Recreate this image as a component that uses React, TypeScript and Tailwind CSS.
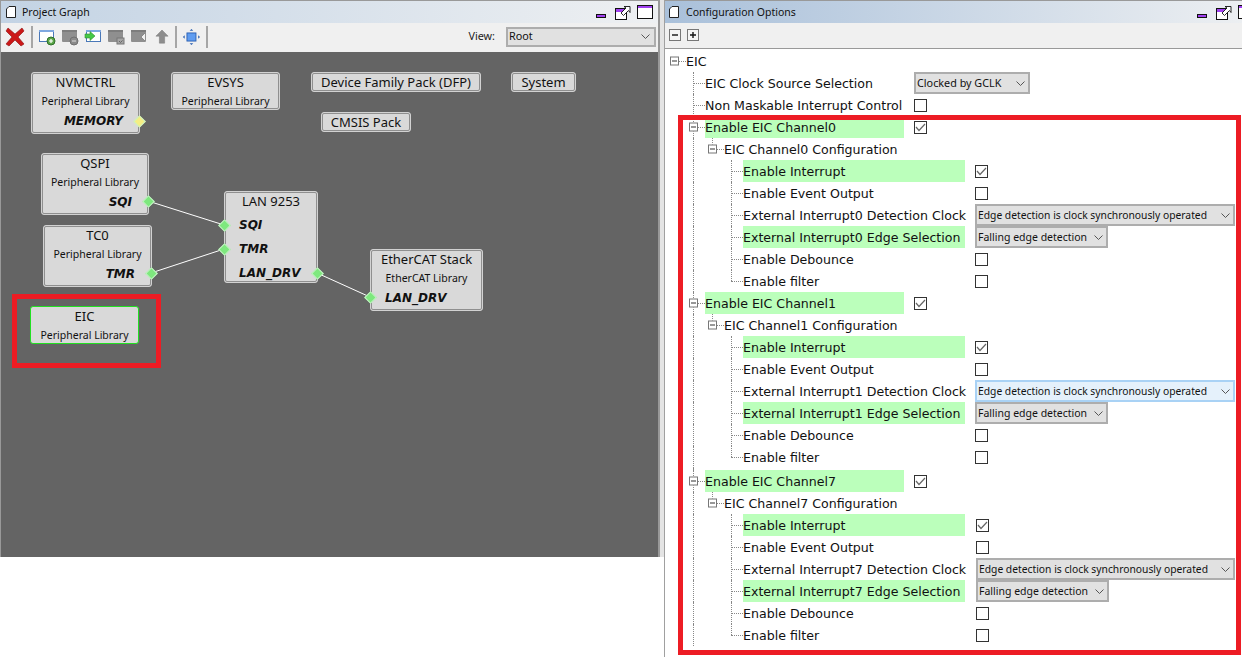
import type { ReactNode } from 'react'

const uiFont = "font-['Noto_Sans','Open_Sans',sans-serif]"
const treeFont = "font-['DejaVu_Sans','Verdana',sans-serif]"

function PageIcon() {
  return (
    <svg width="10" height="12" viewBox="0 0 10 12" className="shrink-0">
      <path d="M3 .5h6.500v11H.5V3z" fill="#fff" stroke="#222" />
    </svg>
  )
}

function WindowButtons() {
  return (
    <div className="flex items-center">
      <svg width="10" height="4" viewBox="0 0 10 4" className="mt-[8px] mr-[9px]">
        <rect x=".5" y=".5" width="9" height="3" fill="#a040f0" stroke="#111" />
      </svg>
      <svg width="16" height="16" viewBox="0 0 16 16" className="mr-[6px]">
        <rect x=".5" y="4.500" width="11" height="11" fill="#fff" stroke="#111" />
        <rect x="1" y="5" width="10" height="3" fill="#a040f0" />
        <path d="M6 9l5-5-2-1.500h6v6l-1.500-2-5 5z" fill="#fff" stroke="#111" strokeWidth=".9" />
      </svg>
      <svg width="16" height="14" viewBox="0 0 16 14">
        <rect x=".5" y=".5" width="15" height="13" fill="#fff" stroke="#111" />
        <rect x="1" y="1" width="14" height="2" fill="#a040f0" />
      </svg>
    </div>
  )
}

function TitleBar({ title, className, gap }: { title: string; className: string; gap: string }) {
  return (
    <div className={`flex h-[23px] shrink-0 items-center justify-between border-t border-[#999] pr-[5px] ${className}`}>
      <div className={`flex items-center ${gap}`}>
        <PageIcon />
        <span className={`${uiFont} mt-[1px] text-[10.5px] text-[#111]`}>{title}</span>
      </div>
      <WindowButtons />
    </div>
  )
}

function GreyWindow({ badge }: { badge?: ReactNode }) {
  return (
    <svg width="18" height="18" viewBox="0 0 18 18">
      <rect x="1" y="2" width="15" height="12" rx="1" fill="#8f8f8f" />
      <rect x="1" y="2" width="15" height="2" fill="#7d7d7d" />
      {badge}
    </svg>
  )
}

function Divider({ className }: { className: string }) {
  return <div className={`h-[22px] w-[2px] bg-[#a6a6a6] ${className}`} />
}

function GraphToolbar() {
  return (
    <div className="flex h-[29px] shrink-0 items-center bg-[#f0f0f0] pr-[2px] pb-[2px] pl-[4px]">
      <svg width="20" height="20" viewBox="0 0 20 20">
        <path d="M3 1l7 6 7-6 2 3-6 6 6 7-3 2-6-6-6 6-3-2 6-7-6-6z" fill="#cc1818" stroke="#8c1010" strokeWidth=".6" />
      </svg>
      <Divider className="mr-[5px] ml-[6px]" />
      <div className="flex items-center gap-[5px]">
        <svg width="18" height="18" viewBox="0 0 18 18">
          <rect x="1.500" y="2.500" width="14" height="11" fill="#fff" stroke="#4a78b8" />
          <rect x="1" y="2" width="15" height="2" fill="#7fa8e0" />
          <circle cx="13" cy="13" r="4" fill="#5aa648" stroke="#2f6f2a" />
          <path d="M13 11v4M11 13h4" stroke="#fff" strokeWidth="1.2" />
        </svg>
        <GreyWindow
          badge={
            <>
              <circle cx="13" cy="13" r="4" fill="#8a8a8a" stroke="#6f6f6f" />
              <path d="M11 13h4" stroke="#ddd" />
            </>
          }
        />
        <svg width="18" height="18" viewBox="0 0 18 18">
          <rect x="2.500" y="2.500" width="14" height="11" fill="#fff" stroke="#4a78b8" />
          <rect x="2" y="2" width="15" height="2" fill="#7fa8e0" />
          <path d="M1 6h5V3.500L11 8l-5 4.500V10H1z" fill="#46c846" stroke="#2f8f2f" strokeWidth=".6" />
        </svg>
        <GreyWindow
          badge={
            <>
              <rect x="10" y="10" width="7" height="6" fill="#a5a5a5" stroke="#777" />
              <path d="M12 13l1.500 1.500 2-2" stroke="#666" fill="none" />
            </>
          }
        />
        <GreyWindow badge={<path d="M15 5l-4 4 4 4" fill="#f0f0f0" stroke="#8a8a8a" />} />
        <svg width="14" height="16" viewBox="0 0 16 18" className="ml-[2px]">
          <path d="M8 1l7 7h-4v8H5V8H1z" fill="#8d8d8d" stroke="#7a7a7a" strokeWidth=".6" />
        </svg>
      </div>
      <Divider className="mr-[5px] ml-[6px]" />
      <svg width="18" height="18" viewBox="0 0 20 20">
        <rect x="5.500" y="5.500" width="10" height="9" fill="#5f9cf0" stroke="#2a5fb0" />
        <path d="M10.500 1l2 2h-4zM10.500 19l2-2h-4zM1 10l2-2v4zM20 10l-2-2v4z" fill="#2a5fb0" />
      </svg>
      <Divider className="ml-[6px]" />
      <div className="flex-1" />
      <span className={`${uiFont} mr-[11px] text-[10.8px] text-[#222]`}>View:</span>
      <div className="flex h-[20px] w-[150px] items-center justify-between border-2 border-[#adadad] bg-[#e1e1e1] pr-[4px] pl-[1px]">
        <span className={`${uiFont} text-[10.8px] text-[#111]`}>Root</span>
        <Chevron />
      </div>
    </div>
  )
}

function Chevron() {
  return (
    <svg width="9" height="5" viewBox="0 0 9 5" className="shrink-0">
      <path d="M.5.5l4 4 4-4" fill="none" stroke="#555" />
    </svg>
  )
}

type PortSide = 'left' | 'right'

function Diamond({ x, y, color = 'bg-[#7ee87e]' }: { x: number; y: number; color?: string }) {
  return (
    <div
      className={`absolute h-[9px] w-[9px] rotate-45 border border-[#c8f0c8] ${color}`}
      style={{ left: x - 5, top: y - 4.5 }}
    />
  )
}

interface NodeProps {
  title: string
  sub?: string
  ports?: { label: string; side: PortSide }[]
  x: number
  y: number
  w: number
  h: number
  selected?: boolean
}

function GraphNode({ title, sub, ports, x, y, w, h, selected }: NodeProps) {
  return (
    <div
      className={`absolute flex flex-col items-center rounded-[3px] border bg-[#d9d9d9] ${uiFont} ${
        selected ? 'border-[#22e022]' : 'border-[#d2d2d2] outline outline-[#8f8f8f] -outline-offset-2'
      }`}
      style={{ left: x - 1, top: y, width: w, height: h }}
    >
      <div className="text-[13px] leading-[18px] text-[#111]">{title}</div>
      {sub && <div className="mt-[2px] text-[10.5px] leading-[16px] text-[#111]">{sub}</div>}
      <div className={`w-full ${sub ? '' : 'mt-[3px]'}`}>
        {ports?.map((p) => (
          <div
            key={p.label}
            className={`w-full font-['DejaVu_Sans',sans-serif] text-[12px] leading-[24px] font-bold text-[#111] italic ${
              p.side === 'right' ? 'pr-[16px] text-right' : 'pl-[14px] text-left'
            }`}
          >
            {p.label}
          </div>
        ))}
      </div>
    </div>
  )
}

function ProjectGraph() {
  return (
    <div className="relative h-[505px] shrink-0 overflow-hidden bg-[#646464]">
      <svg className="absolute top-0 left-0" width="660" height="505">
        <g stroke="#fff" strokeWidth="1">
          <line x1="147" y1="149" x2="223" y2="173" />
          <line x1="150" y1="221" x2="223" y2="197" />
          <line x1="316" y1="221" x2="369" y2="245" />
        </g>
      </svg>
      <GraphNode title="NVMCTRL" sub="Peripheral Library" ports={[{ label: 'MEMORY', side: 'right' }]} x={31} y={20} w={109} h={62} />
      <GraphNode title="EVSYS" sub="Peripheral Library" x={171} y={20} w={109} h={38} />
      <GraphNode title="Device Family Pack (DFP)" x={311} y={20} w={170} h={20} />
      <GraphNode title="System" x={511} y={20} w={65} h={20} />
      <GraphNode title="CMSIS Pack" x={321} y={60} w={90} h={20} />
      <GraphNode title="QSPI" sub="Peripheral Library" ports={[{ label: 'SQI', side: 'right' }]} x={41} y={101} w={108} h={62} />
      <GraphNode title="TC0" sub="Peripheral Library" ports={[{ label: 'TMR', side: 'right' }]} x={43} y={173} w={109} h={62} />
      <GraphNode
        title="LAN 9253"
        ports={[
          { label: 'SQI', side: 'left' },
          { label: 'TMR', side: 'left' },
          { label: 'LAN_DRV', side: 'left' },
        ]}
        x={224}
        y={139}
        w={94}
        h={92}
      />
      <GraphNode title="EtherCAT Stack" sub="EtherCAT Library" ports={[{ label: 'LAN_DRV', side: 'left' }]} x={370} y={197} w={113} h={62} />
      <GraphNode title="EIC" sub="Peripheral Library" x={30} y={254} w={109} h={38} selected />
      <Diamond x={139} y={69} color="bg-[#f4ee84]" />
      <Diamond x={148} y={149} />
      <Diamond x={224} y={173} />
      <Diamond x={151} y={221} />
      <Diamond x={224} y={197} />
      <Diamond x={317} y={221} />
      <Diamond x={370} y={245} />
      <div className="absolute top-[242px] left-[11px] h-[74px] w-[149px] border-[5px] border-[#ed1c24]" />
    </div>
  )
}

function Expander() {
  return (
    <span className="absolute top-1/2 -left-[4px] flex h-[9px] w-[9px] -translate-y-1/2 items-center justify-center border border-[#777] bg-white">
      <span className="h-px w-[5px] bg-[#333]" />
    </span>
  )
}

interface RowProps {
  level: number
  label: string
  open?: boolean
  last?: boolean
  green?: boolean
  width?: number
  gap?: number
  children?: ReactNode
}

function Row({ level, label, open, last, green, width, gap = 10, children }: RowProps) {
  return (
    <div className="relative flex h-[22px] items-center">
      {level > 0 && <span className="w-[19px] shrink-0" />}
      {level > 1 && <span className="w-[19px] shrink-0 self-stretch border-l border-dotted border-[#888]" />}
      {level > 2 && <span className="w-[19px] shrink-0" />}
      <span className="relative w-[12px] shrink-0 self-stretch">
        {level > 0 && (
          <span className={`absolute top-0 left-0 border-l border-dotted border-[#888] ${last ? 'h-1/2' : 'h-full'}`} />
        )}
        <span className="absolute top-1/2 left-0 w-full border-t border-dotted border-[#888]" />
        {open && <Expander />}
      </span>
      <span
        className={`${treeFont} flex h-full items-center pt-[2px] whitespace-nowrap text-[12.6px] text-[#111] ${green ? 'bg-[#bbffbb]' : ''}`}
        style={{ width, marginRight: width ? gap : 6 }}
      >
        {label}
      </span>
      {children}
    </div>
  )
}

function Check({ on }: { on?: boolean }) {
  return (
    <span className="flex h-[13px] w-[13px] items-center justify-center border border-[#333] bg-white">
      {on && (
        <svg width="11" height="9" viewBox="0 0 11 9">
          <path d="M1 4l3 3.500L10 1" fill="none" stroke="#666" strokeWidth="1.2" />
        </svg>
      )}
    </span>
  )
}

function Combo({
  text,
  width,
  size = 'text-[10.5px]',
  hover,
}: {
  text: string
  width: number
  size?: string
  hover?: boolean
}) {
  return (
    <span
      className={`${uiFont} flex h-[22px] items-center justify-between border-2 pt-[1px] pr-[3px] pl-[1px] whitespace-nowrap text-[#111] ${size} ${
        hover ? 'border-[#a9d2f5] bg-[#e5f1fb]' : 'border-[#adadad] bg-[#e1e1e1]'
      }`}
      style={{ width }}
    >
      {text}
      <Chevron />
    </span>
  )
}

function Channel({ n }: { n: number }) {
  const gap = n === 7 ? 11 : 10
  return (
    <>
      {n === 7 && <div className="ml-[19px] h-[2px] border-l border-dotted border-[#888]" />}
      <Row level={1} label={`Enable EIC Channel${n}`} open green width={199}>
        <Check on />
      </Row>
      <Row level={2} label={`EIC Channel${n} Configuration`} open last />
      <Row level={3} label="Enable Interrupt" green width={222} gap={gap}>
        <Check on />
      </Row>
      <Row level={3} label="Enable Event Output" width={222} gap={gap}>
        <Check />
      </Row>
      <Row level={3} label={`External Interrupt${n} Detection Clock`} width={222} gap={gap}>
        <Combo
          text="Edge detection is clock synchronously operated"
          width={n === 7 ? 259 : 260}
          size="text-[10.3px]"
          hover={n === 1}
        />
      </Row>
      <Row level={3} label={`External Interrupt${n} Edge Selection`} green width={222} gap={gap}>
        <Combo text="Falling edge detection" width={133} />
      </Row>
      <Row level={3} label="Enable Debounce" width={222} gap={gap}>
        <Check />
      </Row>
      <Row level={3} label="Enable filter" last width={222} gap={gap}>
        <Check />
      </Row>
    </>
  )
}

function ConfigTree() {
  return (
    <div className="relative flex-1 overflow-hidden border-t border-[#999] bg-white pt-[1px] pl-[9px]">
      <Row level={0} label="EIC" open />
      <Row level={1} label="EIC Clock Source Selection" width={199}>
        <Combo text="Clocked by GCLK" width={116} size="text-[10.8px]" />
      </Row>
      <Row level={1} label="Non Maskable Interrupt Control" width={199}>
        <Check />
      </Row>
      <Channel n={0} />
      <Channel n={1} />
      <Channel n={7} />
      <div className="absolute top-[66px] left-[13px] h-[540px] w-[563px] border-[5px] border-[#ed1c24]" />
    </div>
  )
}

export default function App() {
  return (
    <div className="flex h-[657px] w-[1242px] overflow-hidden bg-white">
      <div className="flex h-[557px] w-[660px] shrink-0 flex-col border-r-2 border-l border-[#999]">
        <TitleBar title="Project Graph" className="bg-gradient-to-r from-[#c3d3e4] to-[#eef0f2] pl-[5px]" gap="gap-[6px]" />
        <GraphToolbar />
        <ProjectGraph />
      </div>
      <div className="h-[557px] w-[4px] shrink-0 bg-[#e4e4e4]" />
      <div className="flex w-[595px] shrink-0 flex-col border-l border-[#a0a0a0]">
        <TitleBar title="Configuration Options" className="bg-gradient-to-r from-[#a9c0da] to-[#eef0f2] pl-[4px]" gap="gap-[7px]" />
        <div className="flex h-[25px] shrink-0 items-center gap-[6px] bg-[#f0f0f0] pb-[1px] pl-[4px]">
          {['M3 6h6', 'M3 6h6M6 3v6'].map((d) => (
            <svg key={d} width="12" height="12" viewBox="0 0 12 12">
              <rect x=".5" y=".5" width="11" height="11" fill="#f4f4f4" stroke="#777" />
              <path d={d} stroke="#111" strokeWidth="1.4" />
            </svg>
          ))}
        </div>
        <ConfigTree />
      </div>
    </div>
  )
}
